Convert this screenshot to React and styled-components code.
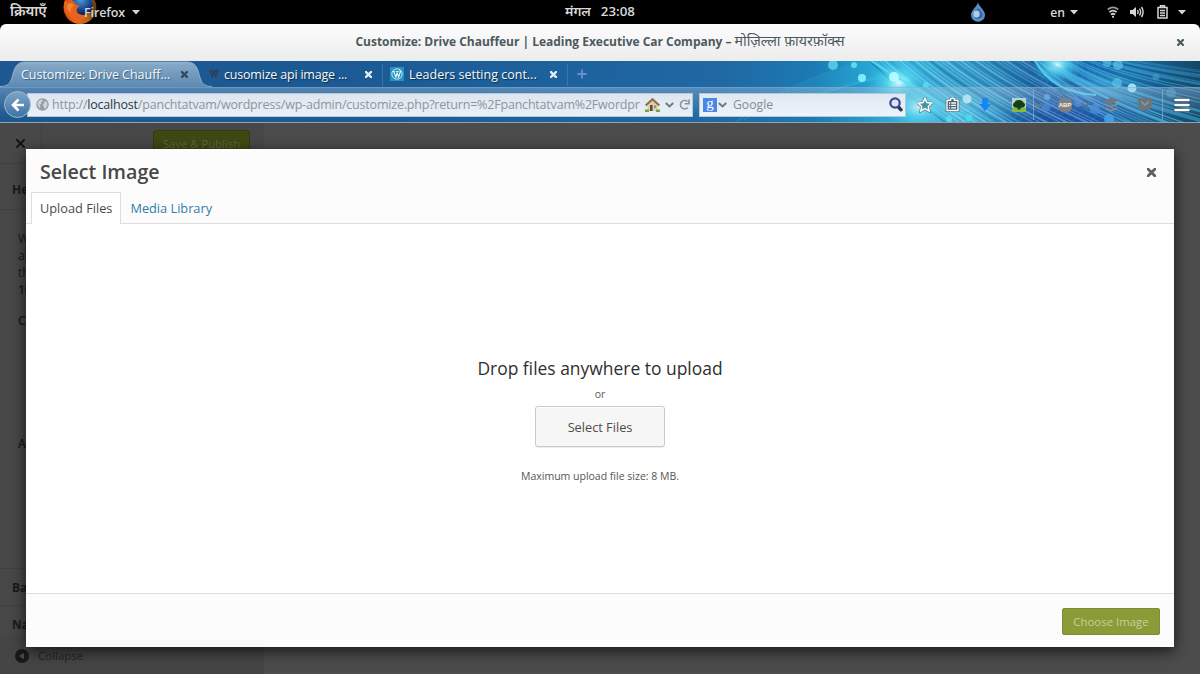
import styled, { createGlobalStyle, css } from 'styled-components';

const GlobalStyle = createGlobalStyle`
  * { box-sizing: border-box; }
  body {
    margin: 0;
    overflow: hidden;
    background: #000;
    font-family: 'Open Sans', 'Noto Sans', sans-serif;
  }
  p, h1 { margin: 0; }
  button { font-family: inherit; padding: 0; }
  svg { display: block; flex: none; }
`;

const tabs = [
  { label: 'Customize: Drive Chauff...', active: true, tracking: -0.02, left: 21 },
  { label: 'cusomize api image ...', icon: <WIcon />, tracking: -0.2, left: 11 },
  { label: 'Leaders setting cont...', icon: <WordPressIcon />, tracking: 0, left: 7 },
];

// lines that stick out on the left of the dialog
const sideLines = [
  { text: 'W', top: 20 },
  { text: 'al', top: 0 },
  { text: 'th', top: 0 },
  { text: '10', top: 0, bold: true },
  { text: 'C', top: 14, bold: true },
  { text: 'A', top: 106, bold: true },
];

// [x1, y1, cx, cy, x2, y2, color, width, opacity]
const strands = [];
for (let i = 0; i < 16; i++)
  strands.push([735 + i * 9, 62 - i * 3, 800 + i * 9, 10, 905 + i * 5, -8, '#35c2e8', 1.6, 0.2]);
for (let i = 0; i < 36; i++)
  strands.push([866 + i * 5, -4, 900 + i * 5.5, 30, 955 + i * 7, 68, i % 4 ? '#a9e8f6' : '#0f568f', i % 3 ? 0.9 : 1.8, 0.5 - i * 0.006]);
for (let i = 0; i < 24; i++)
  strands.push([1028 + i * 4, -4, 1058 + i * 6, 38 - i, 1130 + i * 15, 78 - i * 2, i % 3 ? '#4dc6f2' : '#12549c', i % 4 ? 1.1 : 2.6, 0.6 - i * 0.014]);
for (let i = 0; i < 12; i++)
  strands.push([985 + i * 9, 66, 1030 + i * 9, 30, 1052 + i * 4, -4, '#4a8fe0', 1, 0.3]);

// [cx, cy, r, color, opacity]
const bubbles = [
  [833, 4, 5, '#58d8ee', 0.8], [854, 4, 3, '#6de8f6', 0.8], [862, 17, 4, '#8af4fb', 0.9],
  [894, 16, 5, '#b9fbff', 0.95], [926, 24, 3, '#52e2f4', 0.8], [967, 38, 4.5, '#c8f4fb', 0.85],
  [949, 58, 3, '#62dcf2', 0.8], [969, 57, 3.5, '#48e0f0', 0.9], [1107, 2, 4, '#53b9e6', 0.7],
  [1118, 4, 5, '#5cc3ec', 0.7], [1117, 22, 5, '#5fc0e8', 0.7], [1132, 27, 4.5, '#9deafa', 0.95],
  [1156, 16, 3.5, '#3f9cc6', 0.7], [1047, 36, 3, '#5aa8ea', 0.8], [1046, 46, 4, '#3c7ed6', 0.8],
  [1078, 42, 4, '#4084d8', 0.7], [1095, 48, 5, '#4186dc', 0.8], [1109, 58, 5, '#49a5ec', 0.8],
  [1171, 32, 5, '#4f9cc8', 0.5],
];

function App() {
  return (
    <Screen>
      <GlobalStyle />
      <TopBar>
        <Activities>क्रियाएँ</Activities>
        <FirefoxLogo />
        <AppName>Firefox</AppName>
        <Triangle />
        <Clock>
          <span>मंगल</span>
          <span>23:08</span>
        </Clock>
        <Status />
      </TopBar>
      <TitleBar>
        <WindowTitle>
          Customize: Drive Chauffeur | Leading Executive Car Company – <Hindi>मोज़िल्ला फ़ायरफ़ॉक्स</Hindi>
        </WindowTitle>
        <WindowClose>
          <Cross size={7} color="#4c5a5e" weight={2.2} />
        </WindowClose>
      </TitleBar>
      <Chrome>
        <ThemeArt />
        <TabBar>
          {tabs.map(({ label, active, icon, tracking, left }) => (
            <Tab key={label} $active={active} $left={left}>
              {active && <TabShape />}
              {icon}
              <TabLabel $active={active} $tracking={tracking}>
                {label}
              </TabLabel>
              <TabClose>
                <Cross size={7} color={active ? '#33485c' : '#e4eef6'} weight={2.3} />
              </TabClose>
            </Tab>
          ))}
          <NewTab>
            <svg width="10" height="10" viewBox="0 0 10 10">
              <path d="M5 0.5v9M0.5 5h9" stroke="#6d8fd0" strokeWidth="1.8" />
            </svg>
          </NewTab>
        </TabBar>
        <NavBar>
          <BackButton>
            <svg width="14" height="14" viewBox="0 0 14 14" fill="none" stroke="#fff" strokeWidth="2.6">
              <path d="M7.5 1.5L2 7l5.5 5.5M2.2 7H13" />
            </svg>
          </BackButton>
          <UrlBar>
            <Globe />
            <Url>
              http://<b>localhost</b>/panchtatvam/wordpress/wp-admin/customize.php?return=%2Fpanchtatvam%2Fwordpr
            </Url>
            <House />
            <Chevron color="#6e7880" />
            <Reload />
          </UrlBar>
          <SearchBar>
            <GoogleTile>g</GoogleTile>
            <Chevron color="#6e7880" />
            <Placeholder>Google</Placeholder>
            <Magnifier />
          </SearchBar>
          <ToolIcons />
        </NavBar>
      </Chrome>
      <Page>
        <Sidebar>
          <SideHeader>
            <SideClose>
              <Cross size={9} color="#111" weight={1.8} />
            </SideClose>
            <SaveButton>Save &amp; Publish</SaveButton>
          </SideHeader>
          <SideTitle>He</SideTitle>
          <SideBody>
            {sideLines.map(({ text, top, bold }) => (
              <SideLine key={text} $top={top} $bold={bold}>
                {text}
              </SideLine>
            ))}
          </SideBody>
          <SideRow $height={37}>Ba</SideRow>
          <SideRow $height={30}>Na</SideRow>
          <Collapse>
            <svg width="14" height="14" viewBox="0 0 14 14">
              <circle cx="7" cy="7" r="7" fill="#191919" />
              <path d="M9 3.8v6.4L4 7z" fill="#4a4a4a" />
            </svg>
            Collapse
          </Collapse>
        </Sidebar>
        <Modal>
          <ModalHeader>
            <ModalTitle>Select Image</ModalTitle>
            <Cross size={9} color="#606060" weight={2.8} />
          </ModalHeader>
          <Router>
            <RouterTab $active>Upload Files</RouterTab>
            <RouterTab>Media Library</RouterTab>
          </Router>
          <Uploader>
            <DropTitle>Drop files anywhere to upload</DropTitle>
            <OrText>or</OrText>
            <SelectButton>Select Files</SelectButton>
            <MaxSize>Maximum upload file size: 8 MB.</MaxSize>
          </Uploader>
          <ModalFooter>
            <ChooseButton>Choose Image</ChooseButton>
          </ModalFooter>
        </Modal>
      </Page>
    </Screen>
  );
}

function Cross({ size, color, weight }) {
  return (
    <svg width={size} height={size} viewBox={`0 0 ${size} ${size}`}>
      <path
        d={`M1 1L${size - 1} ${size - 1}M${size - 1} 1L1 ${size - 1}`}
        stroke={color}
        strokeWidth={weight}
        strokeLinecap="square"
      />
    </svg>
  );
}

function Chevron({ color }) {
  return (
    <svg width="9" height="6" viewBox="0 0 9 6">
      <path d="M0.8 1L4.5 4.5L8.2 1" fill="none" stroke={color} strokeWidth="1.9" />
    </svg>
  );
}

function Triangle() {
  return (
    <svg width="8" height="5" viewBox="0 0 8 5">
      <path d="M0 0h8L4 4.6z" fill="#d6d6d6" />
    </svg>
  );
}

function FirefoxLogo() {
  return (
    <svg width="34" height="24" viewBox="0 0 34 24">
      <defs>
        <linearGradient id="fox" x1="0" y1="0" x2="1" y2="0">
          <stop offset="0" stopColor="#dd4314" />
          <stop offset="0.4" stopColor="#e9671c" />
          <stop offset="0.75" stopColor="#b5651a" />
          <stop offset="1" stopColor="#3c2408" />
        </linearGradient>
        <radialGradient id="earth" cx="0.4" cy="0.3" r="0.7">
          <stop offset="0" stopColor="#4d9edb" />
          <stop offset="0.6" stopColor="#1c4b94" />
          <stop offset="1" stopColor="#0c1d48" />
        </radialGradient>
      </defs>
      <circle cx="17" cy="7.5" r="16.5" fill="url(#fox)" />
      <circle cx="20" cy="4" r="11" fill="url(#earth)" />
      <path d="M2 0l3 3 6-2c0 3 3 4 6 5-3 1-4 3-3 6 2 3 6 4 10 3-3 5-11 7-17 2C0 12 0 5 2 0z" fill="#e8641e" />
      <path d="M5 4c2-1 5 0 6 2-3 1-4 4-2 7-4-2-6-5-4-9z" fill="#f2a03a" opacity=".6" />
      <path d="M28 0c3 5 2 11-3 15 5-1 8-5 8-9 0-3-1-5-2-6z" fill="#6c4416" />
    </svg>
  );
}

function Status() {
  return (
    <StatusArea>
      <svg width="16" height="20" viewBox="0 0 16 20">
        <path d="M8 0.5C9.5 5 15 8.5 15 13a7 6.8 0 0 1-14 0C1 8.5 6.5 5 8 0.5z" fill="#5d8ec2" />
        <path d="M8 6c3 3 5 5 4.5 8S5 18 3.5 14 7 8 8 6z" fill="#3565a4" />
        <ellipse cx="6.5" cy="12" rx="3.2" ry="3.6" fill="#a9cdea" />
      </svg>
      <Language>en</Language>
      <Triangle />
      <WifiSlot>
        <svg width="12" height="12" viewBox="0 0 12 12" fill="none" stroke="#d6d6d6" strokeWidth="1.8">
          <path d="M0.8 3.5Q6-0.8 11.2 3.5" stroke="#9a9a9a" />
          <path d="M2.4 6.2Q6 3 9.6 6.2" />
          <path d="M4 8.6Q6 6.8 8 8.6" />
          <circle cx="6" cy="10.8" r="1.1" fill="#d6d6d6" stroke="none" />
        </svg>
      </WifiSlot>
      <svg width="14" height="12" viewBox="0 0 14 12" fill="none" stroke="#d6d6d6" strokeWidth="1.4">
        <path d="M0 4h2.5L6 1v10L2.5 8H0z" fill="#d6d6d6" stroke="none" />
        <path d="M7.5 4q1.2 2 0 4M9.5 2.5q2.2 3.5 0 7M11.5 1q3.2 5 0 10" />
      </svg>
      <BatterySlot>
        <svg width="11" height="14" viewBox="0 0 11 14" fill="none" stroke="#d6d6d6" strokeWidth="1.5">
          <path d="M3.5 2V0.8h4V2M1 2.5h9v10.5h-9z" />
          <path d="M3 5.5h5M3 8h5M3 10.5h5" />
        </svg>
      </BatterySlot>
      <Triangle />
    </StatusArea>
  );
}

function ThemeArt() {
  return (
    <Art>
      <svg width="1200" height="62" viewBox="0 0 1200 62">
        <defs>
          <linearGradient id="sky">
            <stop offset="0" stopColor="#1d5890" />
            <stop offset="0.3" stopColor="#1b5a94" />
            <stop offset="0.6" stopColor="#2068a4" />
            <stop offset="0.68" stopColor="#1c7bb4" />
            <stop offset="0.735" stopColor="#28a8d6" />
            <stop offset="0.78" stopColor="#38a7d4" />
            <stop offset="0.83" stopColor="#2a88bc" />
            <stop offset="0.865" stopColor="#1a5f9e" />
            <stop offset="0.91" stopColor="#1d72b4" />
            <stop offset="0.95" stopColor="#1a679c" />
            <stop offset="1" stopColor="#134666" />
          </linearGradient>
          <radialGradient id="glow">
            <stop offset="0" stopColor="#d9fdff" />
            <stop offset="0.35" stopColor="#5fe2f6" stopOpacity="0.75" />
            <stop offset="1" stopColor="#2cb0e0" stopOpacity="0" />
          </radialGradient>
          <radialGradient id="haze">
            <stop offset="0" stopColor="#5fd6f0" stopOpacity="0.7" />
            <stop offset="1" stopColor="#3fb4e0" stopOpacity="0" />
          </radialGradient>
          <radialGradient id="deep">
            <stop offset="0" stopColor="#1a4aa4" stopOpacity="0.85" />
            <stop offset="1" stopColor="#153f98" stopOpacity="0" />
          </radialGradient>
        </defs>
        <rect width="1200" height="62" fill="url(#sky)" />
        <ellipse cx="1070" cy="54" rx="75" ry="30" fill="url(#deep)" />
        <ellipse cx="955" cy="50" rx="65" ry="34" fill="url(#haze)" />
        <ellipse cx="1105" cy="22" rx="60" ry="20" fill="url(#haze)" opacity="0.55" />
        {strands.map(([x1, y1, cx, cy, x2, y2, color, width, opacity], i) => (
          <path
            key={i}
            d={`M${x1} ${y1}Q${cx} ${cy} ${x2} ${y2}`}
            fill="none"
            stroke={color}
            strokeWidth={width}
            opacity={opacity}
          />
        ))}
        <ellipse cx="899" cy="22" rx="34" ry="28" fill="url(#glow)" />
        <ellipse cx="1057" cy="4" rx="27" ry="20" fill="url(#glow)" />
        <ellipse cx="918" cy="46" rx="38" ry="28" fill="url(#glow)" opacity="0.85" />
        <path d="M868-2Q905 22 980 64M1034-2Q1052 32 1096 34" fill="none" stroke="#54def5" strokeWidth="2" opacity="0.8" />
        <path d="M1042-2Q1085 28 1210 62" fill="none" stroke="#4fc0ee" strokeWidth="4" opacity="0.45" />
        {bubbles.map(([cx, cy, r, color, opacity]) => (
          <circle key={`${cx}-${cy}`} cx={cx} cy={cy} r={r} fill={color} opacity={opacity} />
        ))}
      </svg>
    </Art>
  );
}

function TabShape() {
  return (
    <TabBack>
      <svg width="212" height="26" viewBox="0 0 212 26">
        <defs>
          <linearGradient id="tab" x1="0" y1="0" x2="0" y2="1">
            <stop offset="0" stopColor="#8eafcb" />
            <stop offset="0.15" stopColor="#82a5c4" />
            <stop offset="1" stopColor="#5c8ab4" />
          </linearGradient>
        </defs>
        <path
          d="M0 26C10 26 11 20 13 13C15 5 18 1 25 1H187C194 1 197 5 199 13C201 20 202 26 212 26z"
          fill="url(#tab)"
        />
        <path
          d="M0 25.5C10 25.5 11 20 13 13C15 5 18 1 25 1H187C194 1 197 5 199 13C201 20 202 25.5 212 25.5"
          fill="none"
          stroke="#9dbdd6"
          strokeWidth="0.8"
        />
      </svg>
    </TabBack>
  );
}

function WIcon() {
  return (
    <svg width="10" height="8" viewBox="0 0 11 9">
      <path d="M0 1h4M4.5 1h6.5M1.5 1L3.5 7.5L5.5 2L7.5 7.5L9.5 1" fill="none" stroke="#333d47" strokeWidth="1.6" />
    </svg>
  );
}

function WordPressIcon() {
  return (
    <svg width="14" height="14" viewBox="0 0 14 14">
      <rect width="14" height="14" fill="#2592c3" />
      <circle cx="7" cy="7" r="5.2" fill="none" stroke="#d4ecf6" strokeWidth="0.9" />
      <path d="M3 4.5h2M6 4.5h2.5M3.8 4.5L5.8 10L7.2 6L8.6 10L10.5 4.5L9.5 3.5" fill="none" stroke="#e8f5fa" strokeWidth="1.2" />
    </svg>
  );
}

function Globe() {
  return (
    <svg width="13" height="13" viewBox="0 0 13 13">
      <circle cx="6.5" cy="6.5" r="6.2" fill="#969da3" />
      <path d="M1.5 5Q2.5 2 6 1.5L7 3L5 4.5L5.5 6L3.5 6.5L4.5 8.5L3.5 10Q1.5 8 1.5 5z" fill="#ced5da" />
      <path d="M8.5 3L11 4Q12 7 10.5 9.5L8.5 11L8 8.5L6.5 7.5L8 5.5z" fill="#ced5da" />
    </svg>
  );
}

function House() {
  return (
    <svg width="15" height="14" viewBox="0 0 15 14">
      <path d="M2.5 6L7.5 1.5L12.5 6V13h-10z" fill="#e3cda0" />
      <path d="M5 7h2.6v6H5z" fill="#5d4b39" />
      <path d="M9 7.5h2.2v2.5H9z" fill="#6f94ae" />
      <path d="M0.6 7.5L7.5 1.2L14.4 7.5" fill="none" stroke="#8c6b49" strokeWidth="2" />
      <path d="M0 11.5h4V14H0zM11 11.5h4V14h-4z" fill="#77a14b" />
    </svg>
  );
}

function Reload() {
  return (
    <svg width="11" height="11" viewBox="0 0 11 11" fill="none" stroke="#88929a" strokeWidth="1.6">
      <path d="M8.8 8.5A4.2 4.2 0 1 1 8.5 2.5" />
      <path d="M10 0.5V4.7H5.8" />
    </svg>
  );
}

function Magnifier() {
  return (
    <svg width="14" height="15" viewBox="0 0 14 15">
      <path d="M9 9.5L12 12.8" stroke="#2e3455" strokeWidth="3.4" strokeLinecap="round" />
      <circle cx="6" cy="6" r="4.7" fill="#dce7f6" stroke="#3e4a8f" strokeWidth="2.2" />
    </svg>
  );
}

function ToolIcons() {
  return (
    <Tools>
      <ToolSlot $width={28}>
        <svg width="16" height="16" viewBox="0 0 16 16">
          <path d="M8 1.3l2 4.3 4.7.6-3.4 3.2.9 4.6L8 11.7 3.8 14l.9-4.6L1.3 6.2 6 5.6z" fill="none" stroke="#33424e" strokeWidth="2.8" opacity=".65" />
          <path d="M8 1.3l2 4.3 4.7.6-3.4 3.2.9 4.6L8 11.7 3.8 14l.9-4.6L1.3 6.2 6 5.6z" fill="#45919f" stroke="#fff" strokeWidth="1.5" />
        </svg>
      </ToolSlot>
      <ToolSlot $width={34}>
        <svg width="15" height="15" viewBox="0 0 15 15">
          <path d="M2 3.2h3.5Q5.5 1 7.5 1T9.5 3.2H13V13.5H2z" fill="#4a6475" stroke="#34434d" strokeWidth="2.6" opacity=".8" />
          <path d="M2 3.2h3.5Q5.5 1 7.5 1T9.5 3.2H13V13.5H2z" fill="#4a6475" stroke="#fff" strokeWidth="1.4" />
          <path d="M4 6h1.2M6.2 6H11M4 8.4h1.2M6.2 8.4H11M4 10.8h1.2M6.2 10.8H11" stroke="#fff" strokeWidth="1.3" />
        </svg>
      </ToolSlot>
      <ToolSlot $width={33}>
        <svg width="12" height="13" viewBox="0 0 12 13">
          <path d="M3.3 0h5.4v6H12L6 13L0 6h3.3z" fill="#1484fa" />
        </svg>
      </ToolSlot>
      <ToolSlot $width={21}>
        <svg width="14" height="14" viewBox="0 0 14 14">
          <rect width="14" height="14" fill="#b4d4cc" />
          <rect y="9.5" width="14" height="4.5" fill="#86b944" />
          <path d="M1.5 8.500Q0 6 2.500 4.500Q3.500 2 7 2T11.500 4.500Q14 6 12.500 8.500Q11 10 8.500 9.800V11.500h-3V9.800Q3 10 1.500 8.500z" fill="#163d18" />
        </svg>
      </ToolSlot>
      <ToolSlot $width={25} $divider>
        <Chevron color="#6c7a82" />
      </ToolSlot>
      <ToolSlot $width={23}>
        <AdBlock>ABP</AdBlock>
      </ToolSlot>
      <ToolSlot $width={23}>
        <Chevron color="#5b7388" />
      </ToolSlot>
      <ToolSlot $width={34}>
        <svg width="14" height="14" viewBox="0 0 14 14">
          <path d="M7 -0.500l7 3.200-7 3.200-7-3.200z" fill="#75777a" />
          <path d="M0 6.500l2-1 5 2.200 5-2.200 2 1-7 3.300z" fill="#898b8d" />
          <path d="M0 10.500l2-1 5 2.200 5-2.200 2 1-7 3.300z" fill="#898b8d" />
        </svg>
      </ToolSlot>
      <ToolSlot $width={14}>
        <svg width="14" height="13" viewBox="0 0 14 13">
          <path d="M1 0.5h12q1 0 1 1V5.5a7 7 0 0 1-14 0V1.5q0-1 1-1z" fill="#717375" />
          <path d="M3.8 4L7 7L10.2 4" fill="none" stroke="#6ba0c4" strokeWidth="1.7" strokeLinecap="round" />
        </svg>
      </ToolSlot>
      <MenuSlot>
        <svg width="16" height="14" viewBox="0 0 16 14">
          <path d="M1.5 2h13M1.5 7h13M1.5 12h13" stroke="#1f3a4c" strokeWidth="4" strokeLinecap="round" opacity=".6" />
          <path d="M1.5 2h13M1.5 7h13M1.5 12h13" stroke="#fff" strokeWidth="2.6" strokeLinecap="round" />
        </svg>
      </MenuSlot>
    </Tools>
  );
}

const Screen = styled.div`
  width: 1200px;
  height: 674px;
  display: flex;
  flex-direction: column;
  overflow: hidden;
`;

const TopBar = styled.div`
  height: 24px;
  flex: none;
  display: flex;
  align-items: center;
  background: #000;
  color: #d8d8d8;
  font-weight: 600;
  position: relative;
`;

const Activities = styled.span`
  width: 53px;
  padding-left: 10px;
  font-size: 14.3px;
  line-height: 20px;
  white-space: nowrap;
  margin: -2px 10px 0 0;
`;

const AppName = styled.span`
  margin: 1px 7px 0 -13px;
  font-size: 12.5px;
  letter-spacing: -0.1px;
`;

const Clock = styled.div`
  position: absolute;
  left: 565px;
  top: 2px;
  display: flex;
  gap: 10px;
  font-size: 13.3px;
  line-height: 18px;
`;

const StatusArea = styled.div`
  margin-left: auto;
  display: flex;
  align-items: center;
  padding-right: 14px;
`;

const Language = styled.span`
  margin: 1px 5px 0 64px;
  font-size: 12.2px;
`;

const WifiSlot = styled.span`
  margin: 0 11px 0 29px;
`;

const BatterySlot = styled.span`
  margin: 0 10px 0 13px;
`;

const TitleBar = styled.div`
  height: 37px;
  flex: none;
  display: flex;
  align-items: center;
  justify-content: center;
  position: relative;
  background: linear-gradient(#fdfdfd, #ececec);
  border-radius: 6px 6px 0 0;
`;

const WindowTitle = styled.div`
  color: #4c595d;
  font-size: 12px;
  font-weight: 700;
  letter-spacing: -0.02px;
  white-space: nowrap;
  padding-bottom: 4px;
`;

const Hindi = styled.span`
  font-size: 14.2px;
  font-weight: 400;
`;

const WindowClose = styled.span`
  position: absolute;
  right: 16px;
  top: 15px;
`;

const Chrome = styled.div`
  height: 62px;
  flex: none;
  position: relative;
  display: flex;
  flex-direction: column;
`;

const Art = styled.div`
  position: absolute;
  inset: 0;
`;

const TabBar = styled.div`
  height: 26px;
  display: flex;
  position: relative;
`;

const Tab = styled.div`
  position: relative;
  display: flex;
  align-items: center;
  width: ${({ $active }) => ($active ? 198 : 185)}px;
  padding-left: ${({ $left }) => $left}px;
  padding-right: ${({ $active }) => ($active ? 10 : 11)}px;
  gap: 5px;

  ${({ $active }) =>
    !$active &&
    css`
      &::after {
        content: '';
        position: absolute;
        right: 0;
        top: 3px;
        height: 22px;
        border-right: 1px solid #3c74a6;
      }
    `}
`;

const TabBack = styled.div`
  position: absolute;
  left: 0;
  top: 0;
`;

const TabLabel = styled.span`
  position: relative;
  color: #f4f8fb;
  font-size: 12.5px;
  letter-spacing: ${({ $tracking }) => $tracking}px;
  white-space: nowrap;
  text-shadow: 1px 1px 1px ${({ $active }) => ($active ? '#3f5f7c' : '#0b2c4a')};
`;

const TabClose = styled.span`
  position: relative;
  margin-left: auto;
`;

const NewTab = styled.div`
  display: flex;
  align-items: center;
  padding-left: 9px;
`;

const NavBar = styled.div`
  height: 36px;
  padding-bottom: 1px;
  position: relative;
  display: flex;
  align-items: center;
  border-top: 1px solid rgba(140, 180, 210, 0.7);
  border-bottom: 1px solid #8fa5b3;
  background: linear-gradient(rgba(170, 195, 220, 0.4), rgba(90, 130, 170, 0.02) 85%);
`;

const BackButton = styled.div`
  width: 27px;
  height: 27px;
  margin-left: 4px;
  z-index: 1;
  display: flex;
  align-items: center;
  justify-content: center;
  border-radius: 50%;
  border: 1px solid #9fbcd2;
  background: linear-gradient(#7ea4c6, #3c73a6);
`;

const UrlBar = styled.div`
  width: 666px;
  height: 24px;
  margin-left: -4px;
  padding: 0 3px 0 8px;
  display: flex;
  align-items: center;
  gap: 5px;
  background: linear-gradient(#dde6f0, #e9f0f7);
  border: 1px solid #b4c8da;
`;

const Url = styled.span`
  flex: 1;
  margin-left: -2px;
  padding-bottom: 1px;
  white-space: nowrap;
  color: #8e959b;
  font-size: 12.5px;
  letter-spacing: -0.2px;

  b {
    font-weight: 400;
    color: #2f373e;
  }
`;

const SearchBar = styled.div`
  width: 207px;
  height: 24px;
  margin-left: 6px;
  padding: 0 2px 0 3px;
  display: flex;
  align-items: center;
  gap: 1px;
  background: linear-gradient(#dfe8f2, #edf3f9);
  border: 1px solid #b4c8da;
`;

const GoogleTile = styled.span`
  width: 14px;
  height: 14px;
  background: #4a86e8;
  color: #fff;
  font: 400 15px/10px 'Liberation Serif', serif;
  text-align: center;
`;

const Placeholder = styled.span`
  flex: 1;
  padding: 0 0 1px 5px;
  color: #858c92;
  font-size: 12.2px;
`;

const Tools = styled.div`
  flex: 1;
  height: 100%;
  display: flex;
  align-items: center;
  padding-left: 11px;
`;

const ToolSlot = styled.div`
  width: ${({ $width }) => $width}px;
  flex: none;
  display: flex;
  align-items: center;

  ${({ $divider }) =>
    $divider &&
    css`
      height: 30px;
      border-left: 1px solid rgba(150, 190, 225, 0.6);
    `}
`;

const AdBlock = styled.span`
  width: 14px;
  height: 14px;
  border-radius: 5px;
  background: #7f8083;
  color: #f2f2f2;
  font: 700 6px/14px 'Liberation Sans', sans-serif;
  text-align: center;
`;

const MenuSlot = styled.div`
  margin-left: 10px;
  padding-left: 11px;
  height: 30px;
  display: flex;
  align-items: center;
  border-left: 1px solid rgba(150, 190, 215, 0.6);
`;

const Page = styled.div`
  flex: 1;
  position: relative;
  background: #4c4c4c;
`;

const Sidebar = styled.div`
  width: 264px;
  height: 100%;
  display: flex;
  flex-direction: column;
  background: #484848;
  color: #191919;
  font-size: 12px;
`;

const SideHeader = styled.div`
  height: 41px;
  display: flex;
  justify-content: space-between;
  border-bottom: 1px solid #414141;
`;

const SideClose = styled.div`
  width: 42px;
  display: flex;
  align-items: center;
  justify-content: center;
  border-right: 1px solid #414141;
`;

const SaveButton = styled.button`
  width: 97px;
  height: 26px;
  margin: 7px 14px 0 0;
  border: 1px solid #303c0c;
  border-radius: 3px;
  background: #3e4914;
  color: #60673f;
  font-size: 11.3px;
`;

const SideTitle = styled.div`
  height: 46px;
  padding: 6px 0 0 12px;
  font-weight: 700;
  line-height: 39px;
  border-bottom: 1px solid #414141;
`;

const SideBody = styled.div`
  flex: 1;
  padding-left: 18px;
`;

const SideLine = styled.p`
  margin-top: ${({ $top }) => $top}px;
  line-height: 17px;
  font-weight: ${({ $bold }) => ($bold ? 600 : 400)};
`;

const SideRow = styled.div`
  height: ${({ $height }) => $height}px;
  padding-left: 12px;
  line-height: 37px;
  font-weight: 700;
  border-top: 1px solid #414141;
`;

const Collapse = styled.div`
  height: 39px;
  padding: 2px 0 0 15px;
  display: flex;
  align-items: center;
  gap: 9px;
  background: #454545;
  color: #232323;
  font-size: 11.5px;
`;

const Modal = styled.div`
  position: absolute;
  left: 26px;
  top: 26px;
  width: 1148px;
  height: 498px;
  display: flex;
  flex-direction: column;
  background: #fcfcfc;
  box-shadow: 0 4px 14px rgba(0, 0, 0, 0.7);
`;

const ModalHeader = styled.div`
  height: 43px;
  padding: 3px 18px 0 14px;
  display: flex;
  align-items: center;
  justify-content: space-between;
`;

const ModalTitle = styled.h1`
  color: #474747;
  font-size: 19.6px;
  line-height: 26px;
  font-weight: 600;
`;

const Router = styled.div`
  height: 32px;
  display: flex;
  padding-left: 5px;
  border-bottom: 1px solid #dedede;
`;

const RouterTab = styled.div`
  height: 32px;
  padding: 0 8px;
  border: 1px solid transparent;
  border-bottom: none;
  color: #2f7cab;
  font-size: 12.75px;
  line-height: 31px;

  ${({ $active }) =>
    $active &&
    css`
      background: #fff;
      border-color: #dedede;
      color: #4a4a4a;
    `}
`;

const Uploader = styled.div`
  flex: 1;
  display: flex;
  flex-direction: column;
  align-items: center;
  background: #fff;
`;

const DropTitle = styled.p`
  margin-top: 131px;
  color: #2f2f2f;
  font-size: 17.45px;
  line-height: 26px;
`;

const OrText = styled.p`
  margin-top: 6px;
  color: #5a5a5a;
  font-size: 10.5px;
  line-height: 14px;
`;

const SelectButton = styled.button`
  width: 130px;
  height: 41px;
  margin-top: 5px;
  border: 1px solid #c9c9c9;
  border-radius: 3px;
  background: #f6f6f6;
  box-shadow: inset 0 1px 0 #fff, 0 1px 0 rgba(0, 0, 0, 0.07);
  color: #4c4c4c;
  font-size: 12.75px;
`;

const MaxSize = styled.p`
  margin-top: 21px;
  color: #555;
  font-size: 10.5px;
  line-height: 16px;
`;

const ModalFooter = styled.div`
  height: 54px;
  padding: 1px 14px 0 0;
  display: flex;
  align-items: center;
  justify-content: flex-end;
  border-top: 1px solid #dedede;
`;

const ChooseButton = styled.button`
  width: 98px;
  height: 27px;
  border: 1px solid #7d8d2f;
  border-radius: 2px;
  background: #8b9b39;
  color: #c8d196;
  font-size: 11.4px;
`;

export default App;
